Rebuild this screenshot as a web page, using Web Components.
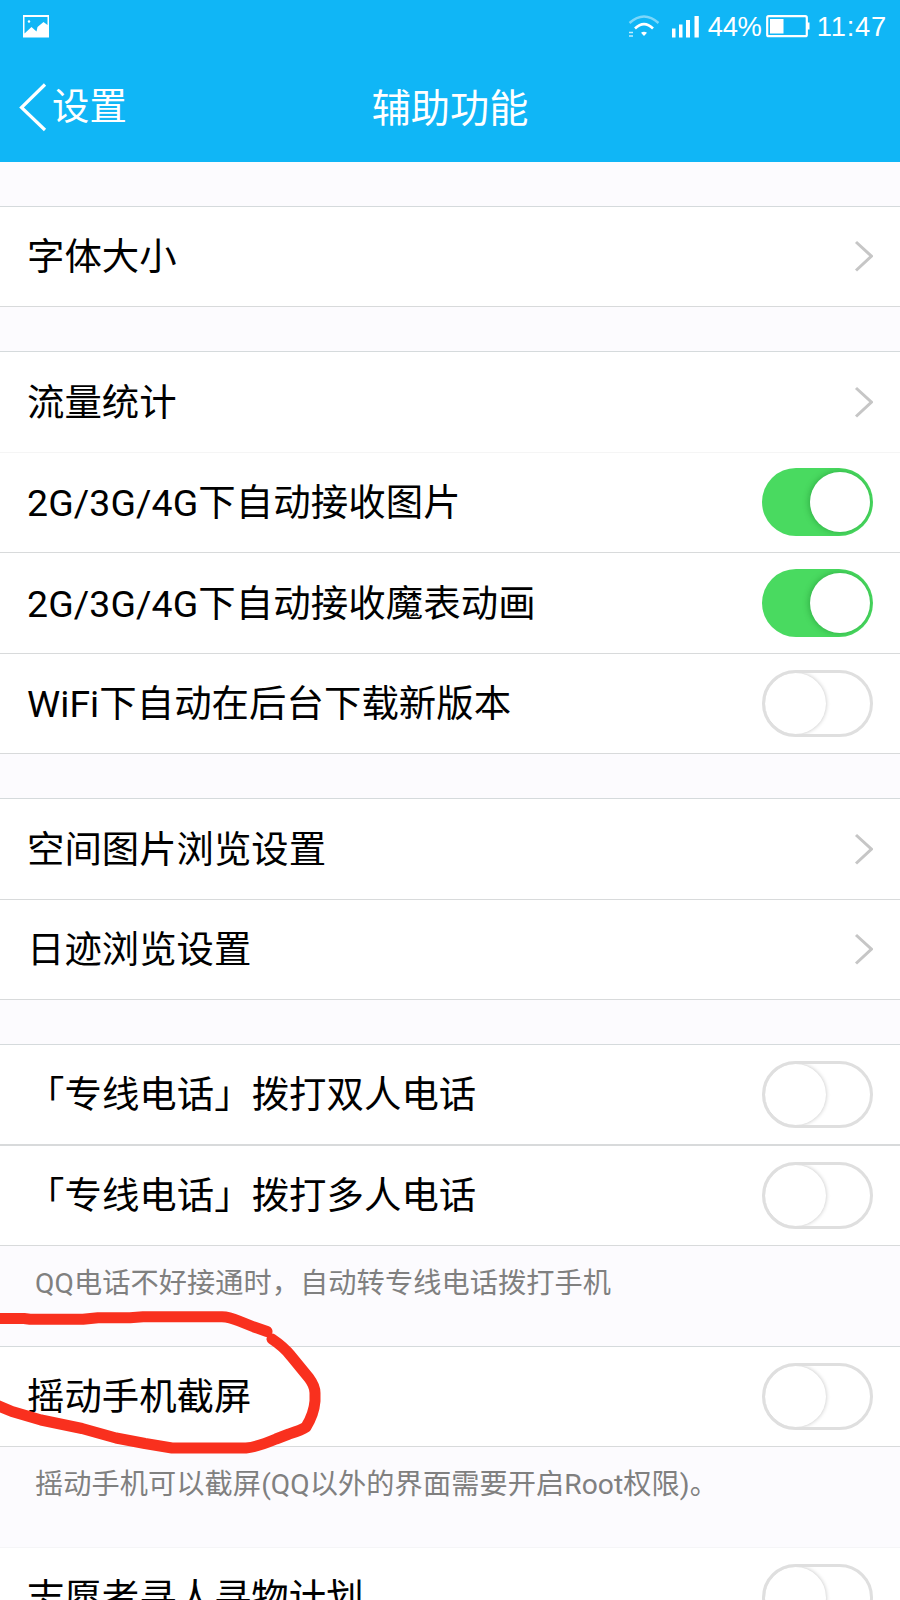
<!DOCTYPE html>
<html lang="zh-CN">
<head>
<meta charset="utf-8">
<title>辅助功能</title>
<style>
html,body{margin:0;padding:0}
body{width:900px;height:1600px;overflow:hidden;background:#fcfbfe;font-family:Roboto,"Noto Sans CJK SC",sans-serif;color:#000}
</style>
</head>
<body>
<settings-screen></settings-screen>
<script>
const define = (name, html) => customElements.define(name, class extends HTMLElement {
  constructor() {
    super();
    const t = document.createElement('template');
    t.innerHTML = html;
    this.attachShadow({mode: 'open'}).append(t.content.cloneNode(true));
  }
});

define('status-bar', `<style>
:host{display:flex;height:54px;align-items:center;box-sizing:border-box;padding:0 13px 2px 22px;color:#fff;font:27.3px/54px "Liberation Sans",sans-serif}
svg{display:block;flex:none}.sp{flex:1}
.wifi{margin-right:11px}.bars{margin-right:8px}.batt{margin:0 7px 0 4px}
span{white-space:nowrap;padding-top:1px}
.pct{letter-spacing:-.2px}
.time{letter-spacing:.8px}
</style>
<svg width="28" height="26" viewBox="0 0 28 26"><path fill="#fff" fill-rule="evenodd" d="M1 2h26v22.500H1zM2.500 4V20.500L9.500 14l5 4.500L15.500 14l6-5 4 3V4z"/><circle cx="7" cy="8.500" r="1.200" fill="#fff"/></svg>
<div class="sp"></div>
<svg class="wifi" width="32" height="24" viewBox="0 0 32 24" fill="none" stroke="#fff"><path d="M1.500 9Q16-4 30.500 9" stroke-width="2.400" opacity=".45"/><path d="M7 14.500Q16 5.500 25 14.500" stroke-width="2.600"/><path d="M13 18.800Q16 16.500 19 18.800L16 22z" fill="#fff" stroke="none"/><path d="M1 18.500h4M1 22h4" stroke-width="1.400" opacity=".75"/></svg>
<svg class="bars" width="29" height="24" viewBox="0 0 29 24" fill="#fff"><path d="M1 14.500h3.500v9H1zM8 10.500h3.500v13H8zM15 6h4v17.500h-4zM23.500 2h4.300v21.500h-4.300z"/></svg>
<span class="pct">44%</span>
<svg class="batt" width="44" height="24" viewBox="0 0 44 24"><rect x="1.200" y="2.200" width="39.600" height="20" rx="1.500" fill="none" stroke="#fff" stroke-width="2.200"/><path d="M4 5H17.500V19.500H4zM41 8.500h2.500v7H41z" fill="#fff"/></svg>
<span class="time">11:47</span>`);

define('nav-bar', `<style>
:host{display:grid;grid-template-columns:1fr auto 1fr;align-items:center;height:108px;color:#fff}
.back{display:flex;align-items:center;padding-left:19px;font-size:37.400px;line-height:50px;gap:5px;padding-bottom:2px}
.title{font-size:39.200px;line-height:54px;padding-top:2px}
svg{display:block}
</style>
<div class="back"><svg width="28" height="50" viewBox="0 0 28 50"><path d="M26 2.500L2.500 25.500 26 48" fill="none" stroke="#fff" stroke-width="3.200"/></svg><slot name="back"></slot></div>
<div class="title"><slot></slot></div><div></div>`);

define('toggle-switch', `<style>
:host{display:block;box-sizing:border-box;width:111px;height:67px;border-radius:34px;border:3px solid #dfdfdf;background:#fff;flex:none;overflow:hidden}
i{display:block;width:61px;height:61px;border-radius:50%;background:#fff;box-shadow:0 0 4px rgba(0,0,0,.25)}
:host([on]){background:#49da60;border:0;height:68px;padding:4px;margin-top:-1px}
:host([on]) i{width:60px;height:60px;margin:0 0 0 43.500px;box-shadow:-1px 0 6px rgba(0,90,20,.35)}
</style><i></i>`);

define('arrow-mark', `<style>:host{display:block;flex:none;width:19px;height:32px;padding-bottom:1px}</style>
<svg width="19" height="32" viewBox="0 0 19 32" style="display:block"><path d="M2 2L17.500 16.200 2 30.500" fill="none" stroke="#c6c6c6" stroke-width="3"/></svg>`);

define('setting-row', `<style>
:host{display:flex;align-items:center;justify-content:space-between;box-sizing:border-box;height:var(--h,101px);flex:none;background:#fff;border-bottom:var(--bw,1px) solid var(--bc,#d8dadb);padding:0 27px;font-size:37.400px;line-height:54px;white-space:nowrap}
:host([first]){border-top:1px solid var(--tc,#d5dadc)}
.t{padding-top:1px;letter-spacing:var(--ls,0)}
</style><span class="t"><slot></slot></span><slot name="end"></slot>`);

define('setting-note', `<style>
:host{display:block;box-sizing:border-box;height:100px;flex:none;padding:17px 35px 0;font-size:28.200px;line-height:42px;letter-spacing:.08px;color:#808080;white-space:nowrap}
</style><slot></slot>`);

define('setting-gap', `<style>:host{display:block;flex:none;height:44px}</style>`);

define('red-circle', `<style>:host{display:block;position:absolute;left:0;top:1300px;width:340px;height:160px;pointer-events:none}svg{display:block}</style>
<svg width="340" height="160" viewBox="0 1300 340 160" fill="none" stroke="#f9301e" stroke-width="11" stroke-linejoin="round" stroke-linecap="round"><path d="M-8 1318.500H24L30 1319.300H83L98 1317.800H130L143 1316.800H222Q229 1317 239 1321L254 1327 267 1331.500"/><path d="M272 1339Q284 1347 291 1356L309 1378Q315 1386 315 1393V1401Q314 1414 306 1427 302 1430 289 1434L276 1439Q257 1447 246 1448H172L145 1443.500 116 1438 82 1428.500 41 1420 12 1411.500-8 1403"/></svg>`);

define('settings-screen', `<style>
:host{display:flex;flex-direction:column;width:900px;height:1600px;overflow:hidden;position:relative;background:#fcfbfe}
header{background:#10b6f6;height:162px;flex:none}
</style>
<header><status-bar></status-bar><nav-bar><span slot="back">设置</span>辅助功能</nav-bar></header>
<setting-gap></setting-gap>
<setting-row first>字体大小<arrow-mark slot="end"></arrow-mark></setting-row>
<setting-gap></setting-gap>
<setting-row first style="--h:102px;--bc:#f5f5f5">流量统计<arrow-mark slot="end"></arrow-mark></setting-row>
<setting-row style="--h:100px;--ls:.12px">2G/3G/4G下自动接收图片<toggle-switch on slot="end"></toggle-switch></setting-row>
<setting-row style="--ls:.12px">2G/3G/4G下自动接收魔表动画<toggle-switch on slot="end"></toggle-switch></setting-row>
<setting-row style="--h:100px;--ls:.06px">WiFi下自动在后台下载新版本<toggle-switch slot="end"></toggle-switch></setting-row>
<setting-gap></setting-gap>
<setting-row first style="--h:102px">空间图片浏览设置<arrow-mark slot="end"></arrow-mark></setting-row>
<setting-row style="--h:100px">日迹浏览设置<arrow-mark slot="end"></arrow-mark></setting-row>
<setting-gap></setting-gap>
<setting-row first style="--h:102px;--bw:2px;--ls:.05px">「专线电话」拨打双人电话<toggle-switch slot="end"></toggle-switch></setting-row>
<setting-row style="--h:100px;--ls:.05px">「专线电话」拨打多人电话<toggle-switch slot="end"></toggle-switch></setting-row>
<setting-note>QQ电话不好接通时，自动转专线电话拨打手机</setting-note>
<setting-row first>摇动手机截屏<toggle-switch slot="end"></toggle-switch></setting-row>
<setting-note>摇动手机可以截屏(QQ以外的界面需要开启Root权限)。</setting-note>
<setting-row first style="--tc:#f5f5f7">志愿者寻人寻物计划<toggle-switch slot="end"></toggle-switch></setting-row>
<red-circle></red-circle>`);
</script>
</body>
</html>
